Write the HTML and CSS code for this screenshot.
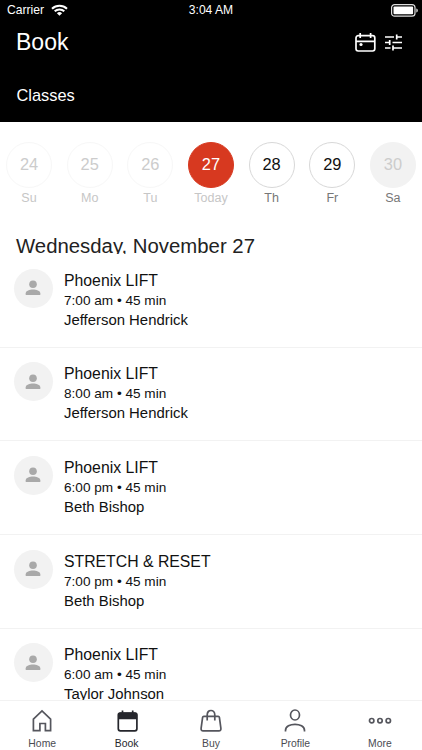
FILE: index.html
```html
<!DOCTYPE html>
<html lang="en">
  <head>
    <meta charset="UTF-8" />
    <meta name="viewport" content="width=device-width, initial-scale=1.0" />
    <title>Book</title>
    <link rel="stylesheet" href="styles.css">
  </head>
  <body>
    <svg class="symbols">
      <symbol id="person" viewBox="0 0 16 16">
        <circle cx="8" cy="4.3" r="3.8" />
        <path d="M.7 15v-1.7C.7 10.700 4.800 9.500 8 9.500s7.300 1.200 7.300 3.800V15z" />
      </symbol>
    </svg>

    <header>
      <div class="status">
        <div class="carrier">
          <span>Carrier</span>
          <svg width="17" height="12" viewBox="0 0 17 12" fill="none" stroke="#fff" stroke-width="2">
            <path d="M1 4.700a10.800 10.800 0 0 1 15 0M3.700 7.300a7 7 0 0 1 9.600 0" />
            <path d="M8.500 11.800L5.900 9.200a3.700 3.700 0 0 1 5.200 0z" fill="#fff" stroke="none" />
          </svg>
        </div>
        <span class="time">3:04 AM</span>
        <svg class="battery" width="28" height="13" viewBox="0 0 28 13">
          <rect x=".6" y=".6" width="23.400" height="11.600" rx="3" fill="none" stroke="#ddd" stroke-width="1.200" />
          <rect x="2.500" y="2.500" width="19.600" height="7.800" rx="1" fill="#fff" />
          <path d="M25.300 4.500c2 .5 2 3.500 0 4z" fill="#ddd" />
        </svg>
      </div>
      <div class="title">
        <h1>Book</h1>
        <svg width="21" height="19" viewBox="0 0 21 19" fill="none" stroke="#fff" stroke-width="1.700">
          <rect x="1" y="2.700" width="18.800" height="15.300" rx="2.200" />
          <path d="M1 8.300h19M5.200 0v5M15.600 0v5" />
          <circle cx="6" cy="11.500" r="1.600" fill="#fff" stroke="none" />
        </svg>
        <svg class="filter" width="17" height="17" viewBox="0 0 17 17" fill="none" stroke="#fff" stroke-width="1.700">
          <path d="M0 3h9M11.700 3H17M11.700 .5v5M0 8.500h4.700M7.500 8.500H17M4.700 6v5M0 14h5.500M8 14h9M8 11.500v5" />
        </svg>
      </div>
      <h2>Classes</h2>
    </header>

    <div class="week">
      <div class="day past"><b>24</b><span>Su</span></div>
      <div class="day past"><b>25</b><span>Mo</span></div>
      <div class="day past"><b>26</b><span>Tu</span></div>
      <div class="day today"><b>27</b><span>Today</span></div>
      <div class="day"><b>28</b><span>Th</span></div>
      <div class="day"><b>29</b><span>Fr</span></div>
      <div class="day closed"><b>30</b><span>Sa</span></div>
    </div>

    <h3>Wednesday, November 27</h3>

    <main>
      <div class="class">
        <div class="avatar"><svg><use href="#person" /></svg></div>
        <div>
          <p class="name">Phoenix LIFT</p>
          <p class="when">7:00 am • 45 min</p>
          <p class="coach">Jefferson Hendrick</p>
        </div>
      </div>
      <div class="class">
        <div class="avatar"><svg><use href="#person" /></svg></div>
        <div>
          <p class="name">Phoenix LIFT</p>
          <p class="when">8:00 am • 45 min</p>
          <p class="coach">Jefferson Hendrick</p>
        </div>
      </div>
      <div class="class">
        <div class="avatar"><svg><use href="#person" /></svg></div>
        <div>
          <p class="name">Phoenix LIFT</p>
          <p class="when">6:00 pm • 45 min</p>
          <p class="coach">Beth Bishop</p>
        </div>
      </div>
      <div class="class">
        <div class="avatar"><svg><use href="#person" /></svg></div>
        <div>
          <p class="name">STRETCH &amp; RESET</p>
          <p class="when">7:00 pm • 45 min</p>
          <p class="coach">Beth Bishop</p>
        </div>
      </div>
      <div class="class">
        <div class="avatar"><svg><use href="#person" /></svg></div>
        <div>
          <p class="name">Phoenix LIFT</p>
          <p class="when">6:00 am • 45 min</p>
          <p class="coach">Taylor Johnson</p>
        </div>
      </div>
    </main>

    <nav>
      <a>
        <svg width="24" height="24" viewBox="0 0 24 24">
          <path d="M3.400 10.200L12 2l8.600 8.200v11.500h-5.200v-7.200H9.900v7.200H3.400z" />
        </svg>
        Home
      </a>
      <a class="active">
        <svg width="24" height="24" viewBox="0 0 24 24">
          <rect x="3.300" y="4" width="18.600" height="17.800" rx="2" />
          <path d="M3 10.200V5.500a2 2 0 0 1 2-2h15.200a2 2 0 0 1 2 2v4.700z" fill="#25262c" stroke="none" />
          <path d="M7.500 1.400v4M17.700 1.400v4" />
        </svg>
        Book
      </a>
      <a>
        <svg width="24" height="24" viewBox="0 0 24 24">
          <path d="M4.800 7.300h14.400q1 0 1.200 1l1.500 11q.2 2.500-2 2.500H4.100q-2.200 0-2-2.500l1.500-11q.2-1 1.200-1zM8.200 11.500V6c0-6 7.600-6 7.600 0v5.500" />
        </svg>
        Buy
      </a>
      <a>
        <svg width="24" height="24" viewBox="0 0 24 24">
          <ellipse cx="12" cy="6" rx="4.500" ry="5" />
          <path d="M2.500 22.500v-1c0-8.300 19-8.300 19 0v1" />
        </svg>
        Profile
      </a>
      <a>
        <svg width="24" height="24" viewBox="0 0 24 24">
          <circle cx="3.700" cy="11.700" r="2.200" />
          <circle cx="12" cy="11.700" r="2.200" />
          <circle cx="20.300" cy="11.700" r="2.200" />
        </svg>
        More
      </a>
    </nav>
  </body>
</html>
```

FILE: styles.css
```css
* {
  padding: 0;
  margin: 0;
  box-sizing: border-box;
}

body {
  font-family: "Liberation Sans", Arial, sans-serif;
  height: 750px;
  display: flex;
  flex-direction: column;
  overflow: hidden;
  background-color: #fff;
  color: #111;
}

h1,
h2,
h3,
b {
  font-weight: normal;
}

.symbols {
  display: none;
}

header {
  flex: none;
  height: 122px;
  background-color: #000;
  color: #fff;
}

.status {
  display: grid;
  grid-template-columns: 1fr auto 1fr;
  align-items: center;
  height: 20px;
  padding: 0 7px;
  font-size: 12.1px;
}

.carrier {
  display: flex;
  align-items: center;
  gap: 7px;
}

.battery {
  justify-self: end;
  margin-right: -4px;
}

.title {
  display: flex;
  align-items: center;
  height: 45px;
  padding: 0 20px 0 16px;
}

.title h1 {
  flex: 1;
  font-size: 23px;
}

.filter {
  margin-left: 9px;
}

h2 {
  padding: 20px 16.5px 0;
  font-size: 16.4px;
  line-height: 20px;
}

.week {
  flex: none;
  display: flex;
  justify-content: space-between;
  height: 110px;
  padding: 20px 6px 0;
}

.day {
  width: 46px;
  text-align: center;
}

.day b {
  display: block;
  height: 46px;
  border: 1px solid #d8d8d8;
  border-radius: 50%;
  font-size: 16.4px;
  line-height: 43px;
}

.day span {
  display: block;
  margin-top: 2px;
  font-size: 12.5px;
  line-height: 17px;
  color: #777;
}

.past b {
  border-color: #f7f7f7;
  color: #ccc;
}

.day.past span,
.day.today span {
  color: #c6c6c6;
}

.today b {
  border-color: #d73920;
  background-color: #d73920;
  color: #fff;
}

.closed b {
  border-color: #f2f2f2;
  background-color: #f2f2f2;
  color: #ccc;
}

h3 {
  flex: none;
  height: 22px;
  overflow: hidden;
  padding-left: 16px;
  font-size: 20.35px;
  line-height: 28px;
  color: #222;
}

main {
  flex: 1;
  min-height: 0;
  overflow: hidden;
}

.class {
  display: flex;
  height: 93.7px;
  padding: 14.6px 13.7px 0;
  border-bottom: 1px solid #f2f2f2;
}

.avatar {
  display: flex;
  align-items: center;
  justify-content: center;
  width: 39px;
  height: 39px;
  margin-right: 11.3px;
  border-radius: 50%;
  background-color: #f2f2f2;
}

.avatar svg {
  width: 16px;
  height: 16px;
  fill: #a9a9a9;
}

.name {
  margin-top: 2px;
  font-size: 15.8px;
  line-height: 20px;
}

.when {
  font-size: 13.6px;
  line-height: 20px;
}

.coach {
  font-size: 14.9px;
  line-height: 18px;
}

nav {
  flex: none;
  display: flex;
  height: 50px;
  padding-top: 8px;
  border-top: 1px solid #f2f2f2;
  background-color: #fff;
}

nav a {
  flex: 1;
  display: flex;
  flex-direction: column;
  align-items: center;
  font-size: 10.4px;
  line-height: 21px;
  color: #4a4b52;
}

nav svg {
  flex: none;
  fill: none;
  stroke: #55565d;
  stroke-width: 1.7;
}

nav .active {
  color: #25262c;
}

.active svg {
  stroke: #25262c;
}
```
